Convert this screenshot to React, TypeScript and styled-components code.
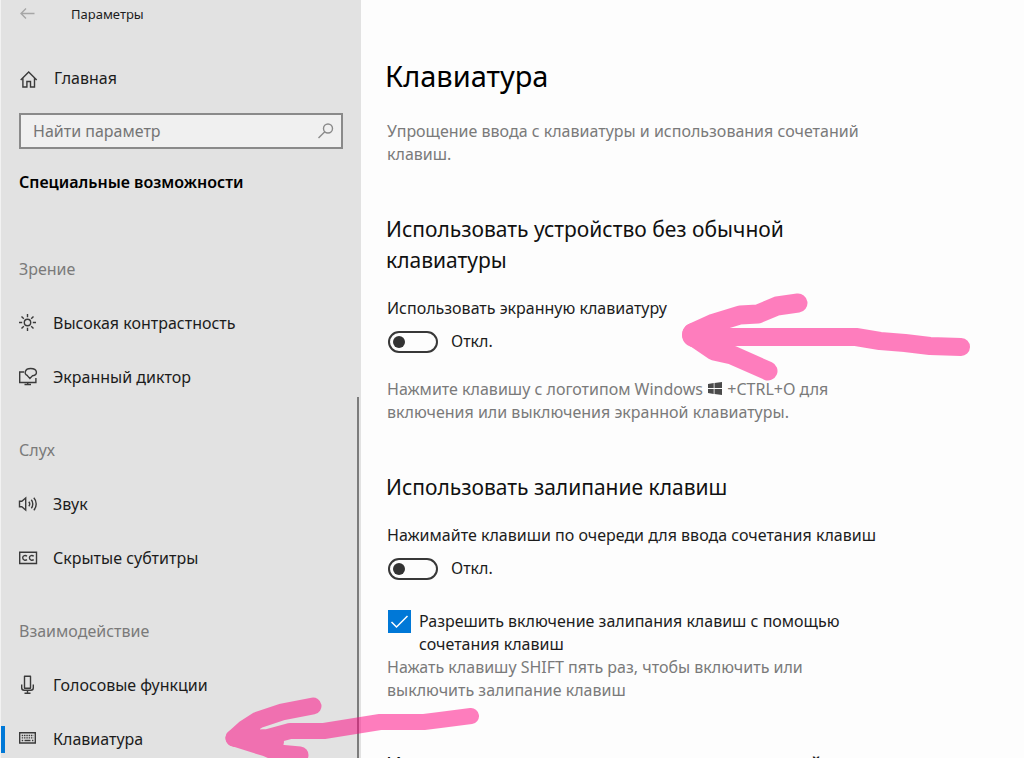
import React, { ReactNode, useState } from 'react';
import styled, { createGlobalStyle } from 'styled-components';

const colors = {
  sidebar: '#e2e2e2',
  page: '#fdfdfd',
  text: '#1c1c1c',
  strong: '#000000',
  muted: '#7a7a7a',
  icon: '#3a3a3a',
  accent: '#0078d7',
};

const GlobalStyle = createGlobalStyle`
  *, *::before, *::after { box-sizing: border-box; }
  body {
    margin: 0;
    background: ${colors.page};
    color: ${colors.text};
    font-family: "Noto Sans", "Open Sans", sans-serif;
    font-size: 16px;
    line-height: 23px;
  }
`;

const Window = styled.div`
  position: relative;
  display: flex;
  height: 100vh;
  overflow: hidden;
`;

const Sidebar = styled.aside`
  position: relative;
  flex: 0 0 361px;
  display: flex;
  flex-direction: column;
  padding-top: 4px;
  border-left: 1px solid #f2f2f2;
  background: ${colors.sidebar};
`;

const TitleBar = styled.header`
  display: flex;
  align-items: center;
  gap: 32px;
  padding-left: 18px;
  font-size: 13px;
  line-height: 20px;
`;

const BackButton = styled.button`
  display: flex;
  padding: 0;
  border: 0;
  background: none;
  color: #a6a6a6;
`;

const HomeLink = styled.a`
  display: flex;
  align-items: center;
  gap: 15px;
  margin-top: 43px;
  padding-left: 18px;
  color: inherit;
  text-decoration: none;
`;

const SearchBox = styled.label`
  flex: none;
  display: flex;
  align-items: center;
  height: 36px;
  margin: 23px 18px 0;
  padding: 0 5px 0 12px;
  border: 2px solid #8a8a8a;
  background: #f0f0f0;
  color: #8a8a8a;
`;

const SearchInput = styled.input`
  flex: 1;
  min-width: 0;
  padding: 0;
  border: 0;
  outline: 0;
  background: none;
  font: inherit;
  color: ${colors.text};
  &::placeholder { color: #757575; opacity: 1; }
`;

const CategoryTitle = styled.h2`
  margin: 22px 18px 48px;
  font-size: 16px;
  font-weight: 600;
  line-height: 23px;
  color: ${colors.strong};
`;

const NavGroup = styled.section`
  & + & { margin-top: 19px; }
`;

const NavHeading = styled.h3`
  display: flex;
  align-items: center;
  height: 54px;
  margin: 0;
  padding-left: 18px;
  font-size: 16px;
  font-weight: 400;
  color: ${colors.muted};
`;

const NavLink = styled.a<{ $active?: boolean }>`
  display: flex;
  align-items: center;
  gap: 15px;
  height: 54px;
  color: inherit;
  text-decoration: none;
  &::before {
    content: "";
    width: 4px;
    height: 27px;
    margin-right: -2px;
    background: ${p => (p.$active ? colors.accent : 'transparent')};
  }
`;

const ScrollThumb = styled.div`
  position: absolute;
  top: 397px;
  right: 2px;
  bottom: 0;
  width: 2px;
  background: #7c7c7c;
`;

const Icon = styled.svg`
  flex: none;
  width: 20px;
  height: 20px;
  fill: none;
  stroke: currentColor;
  stroke-width: 1.4;
  color: ${colors.icon};
`;

const LightIcon = styled(Icon)`
  color: inherit;
`;

const Main = styled.main`
  flex: 1;
  min-width: 0;
  padding: 57px 26px 0;
`;

const Content = styled.div`
  max-width: 496px;
`;

const PageTitle = styled.h1`
  margin: 0 0 25px -2px;
  font-size: 29px;
  font-weight: 400;
  line-height: 38px;
  color: ${colors.strong};
`;

const Note = styled.p`
  margin: 0;
  color: ${colors.muted};
`;

const Section = styled.section`
  margin-top: 48px;
`;

const SectionTitle = styled.h2`
  margin: 0 0 21px -1px;
  font-size: 21px;
  font-weight: 400;
  line-height: 31px;
  color: #111111;
`;

const ToggleField = styled.div`
  display: flex;
  flex-direction: column;
  gap: 10px;
`;

const ToggleRow = styled.div`
  display: flex;
  align-items: center;
  gap: 13px;
`;

const Switch = styled.input`
  appearance: none;
  display: flex;
  align-items: center;
  width: 50px;
  height: 22px;
  margin: 0 0 0 1px;
  padding: 0 3px;
  border: 2px solid #383838;
  border-radius: 11px;
  &::before {
    content: "";
    width: 12px;
    height: 12px;
    border-radius: 50%;
    background: #333333;
  }
  &:checked { justify-content: flex-end; }
`;

const CheckField = styled.label`
  display: grid;
  grid-template-columns: 23px 1fr;
  column-gap: 8px;
  margin: 30px 0 0 1px;
`;

const CheckInput = styled.input`
  appearance: none;
  grid-area: 1 / 1;
  width: 23px;
  height: 23px;
  margin: 0;
  border: 2px solid #383838;
  &:checked { border: 0; background: ${colors.accent}; }
  &:not(:checked) + svg { display: none; }
`;

const CheckMark = styled.svg`
  grid-area: 1 / 1;
  width: 23px;
  height: 23px;
  fill: none;
  stroke: #ffffff;
  stroke-width: 1.5;
  pointer-events: none;
`;

const HelpNote = styled(Note)`
  margin-top: 25px;
`;

const WindowsGlyph = styled.svg`
  width: 14px;
  height: 13px;
  margin: 0 1px;
  fill: #4a4a4a;
`;

const Marker = styled.svg<{ $left: number; $top: number }>`
  position: absolute;
  left: ${p => p.$left}px;
  top: ${p => p.$top}px;
  fill: none;
  stroke: #ff007f;
  stroke-linecap: round;
  stroke-linejoin: round;
  opacity: 0.5;
  pointer-events: none;
`;

type Glyph = 'contrast' | 'narrator' | 'sound' | 'captions' | 'mic' | 'keyboard';

const glyphs: Record<Glyph, ReactNode> = {
  contrast: (
    <>
      <circle cx="9.5" cy="9.5" r="3.2" />
      <path d="M9.5 1v3.200M9.5 14.800v3.200M1 9.5h3.200M14.800 9.5h3.200M3.500 3.500l2.300 2.300M13.200 13.200l2.300 2.300M15.500 3.500l-2.300 2.300M5.800 13.200l-2.300 2.300" />
    </>
  ),
  narrator: (
    <>
      <path d="M6 5H1.700v10.500h16.200V11" />
      <path d="M9.700 15.500v2.200M6.500 17.500h6.500" />
      <path d="M9.800 8.600C5.600 7 6.500 1.500 12.700 1.500c7 0 7.600 6.300 1.700 7.300l-2.500 2.700-2.600-2.900" />
    </>
  ),
  sound: (
    <>
      <path d="M1.500 7.200h2.300L7.700 4v12l-3.900-3.200H1.500z" />
      <path d="M10.800 7.800c1 1.200 1 3.200 0 4.400M13.300 5.800c2 2.300 2 6.100 0 8.400M15.800 3.800c3.200 3.500 3.200 8.900 0 12.400" />
    </>
  ),
  captions: (
    <>
      <path d="M1.700 4.200h16.800v11.300H1.700z" />
      <path d="M9 8.200C7.600 7 4.700 7.300 4.700 9.800s2.900 2.900 4.300 1.800M15.700 8.200c-1.400-1.200-4.300-.9-4.300 1.600s2.900 2.900 4.300 1.800" />
    </>
  ),
  mic: (
    <>
      <path d="M6.500 1.200h6v12h-6z" strokeLinejoin="round" />
      <path d="M3.700 9.500v3.300c0 1.500.9 2.500 2.500 2.500h6.600c1.600 0 2.500-1 2.500-2.500V9.500M9.500 15.300v3M6.500 18.200h6" />
    </>
  ),
  keyboard: (
    <>
      <path d="M1.700 3.700h15.600v10.300H1.700z" />
      <path d="M3.700 6.500h11.800M3.700 8.900h11.800" strokeDasharray="1.500 0.800" />
      <path d="M3.700 11.500h1.500M6.500 11.500h6M13.900 11.500h1.500" />
    </>
  ),
};

const groups: { title: string; items: { label: string; glyph: Glyph; active?: boolean }[] }[] = [
  {
    title: 'Зрение',
    items: [
      { label: 'Высокая контрастность', glyph: 'contrast' },
      { label: 'Экранный диктор', glyph: 'narrator' },
    ],
  },
  {
    title: 'Слух',
    items: [
      { label: 'Звук', glyph: 'sound' },
      { label: 'Скрытые субтитры', glyph: 'captions' },
    ],
  },
  {
    title: 'Взаимодействие',
    items: [
      { label: 'Голосовые функции', glyph: 'mic' },
      { label: 'Клавиатура', glyph: 'keyboard', active: true },
    ],
  },
];

function Toggle({ id, label }: { id: string; label: string }) {
  const [on, setOn] = useState(false);
  return (
    <ToggleField>
      <label htmlFor={id}>{label}</label>
      <ToggleRow>
        <Switch id={id} type="checkbox" role="switch" checked={on} onChange={e => setOn(e.target.checked)} />
        <span>{on ? 'Вкл.' : 'Откл.'}</span>
      </ToggleRow>
    </ToggleField>
  );
}

export default function App() {
  return (
    <>
      <GlobalStyle />
      <Window>
        <Sidebar>
          <TitleBar>
            <BackButton type="button" aria-label="Назад">
              <LightIcon viewBox="0 0 20 20">
                <path d="M15.500 9.500H2M7 4.500L2 9.500l5 5" />
              </LightIcon>
            </BackButton>
            <span>Параметры</span>
          </TitleBar>
          <HomeLink href="#home">
            <Icon viewBox="0 0 20 20">
              <path d="M1.700 11L9.700 3l8 8M3.900 9v9h4v-5.500h3.600V18h4V9" />
            </Icon>
            Главная
          </HomeLink>
          <SearchBox>
            <SearchInput type="text" placeholder="Найти параметр" aria-label="Найти параметр" />
            <LightIcon viewBox="0 0 20 20">
              <circle cx="12" cy="7.500" r="4.500" />
              <path d="M8.800 10.800L2.500 17" />
            </LightIcon>
          </SearchBox>
          <CategoryTitle>Специальные возможности</CategoryTitle>
          <nav>
            {groups.map(group => (
              <NavGroup key={group.title}>
                <NavHeading>{group.title}</NavHeading>
                {group.items.map(item => (
                  <NavLink key={item.label} href={'#' + item.glyph} $active={item.active}>
                    <Icon viewBox="0 0 20 20">{glyphs[item.glyph]}</Icon>
                    {item.label}
                  </NavLink>
                ))}
              </NavGroup>
            ))}
          </nav>
          <ScrollThumb />
        </Sidebar>
        <Main>
          <Content>
            <PageTitle>Клавиатура</PageTitle>
            <Note>Упрощение ввода с клавиатуры и использования сочетаний клавиш.</Note>
            <Section>
              <SectionTitle>Использовать устройство без обычной клавиатуры</SectionTitle>
              <Toggle id="screen-keyboard" label="Использовать экранную клавиатуру" />
              <HelpNote>
                Нажмите клавишу с логотипом Windows{' '}
                <WindowsGlyph viewBox="0 0 14 13" role="img" aria-label="Windows">
                  <path d="M0 2l5.700-.9v5H0zM6.500 1L14 0v6.100H6.500zM0 6.900h5.700v5L0 11zM6.500 6.900H14V13l-7.500-1z" />
                </WindowsGlyph>{' '}
                +CTRL+O для включения или выключения экранной клавиатуры.
              </HelpNote>
            </Section>
            <Section>
              <SectionTitle>Использовать залипание клавиш</SectionTitle>
              <Toggle id="sticky-keys" label="Нажимайте клавиши по очереди для ввода сочетания клавиш" />
              <CheckField>
                <CheckInput type="checkbox" defaultChecked />
                <CheckMark viewBox="0 0 23 23">
                  <path d="M3.500 12l5 5L19.500 6" />
                </CheckMark>
                <span>Разрешить включение залипания клавиш с помощью сочетания клавиш</span>
              </CheckField>
              <Note>Нажать клавишу SHIFT пять раз, чтобы включить или выключить залипание клавиш</Note>
            </Section>
            <Section>
              <SectionTitle>Использовать озвучивание переключений</SectionTitle>
            </Section>
          </Content>
        </Main>
        <Marker $left={670} $top={280} width="320" height="110" viewBox="670 280 320 110">
          <path strokeWidth="18" d="M698 337H856L880 341 905 343 930 346 961 347" />
          <path strokeWidth="19" d="M692 333L714 323 740 315 758 314 777 306 798 303" />
          <path strokeWidth="19" d="M692 336L714 351 732 355 768 371" />
          <path strokeWidth="24" d="M694 335L716 330M694 335L716 342" />
        </Marker>
        <Marker $left={215} $top={690} width="275" height="80" viewBox="215 690 275 80">
          <path strokeWidth="16" d="M236 739L268 737 290 731H324L380 722H424L440 720 471 716" />
          <path strokeWidth="17" d="M234 738L244 729 258 720 282 712 313 706" />
          <path strokeWidth="17" d="M234 738L266 748 278 753 300 755" />
          <path strokeWidth="16" d="M240 735L252 730M250 742L276 742" />
        </Marker>
      </Window>
    </>
  );
}
